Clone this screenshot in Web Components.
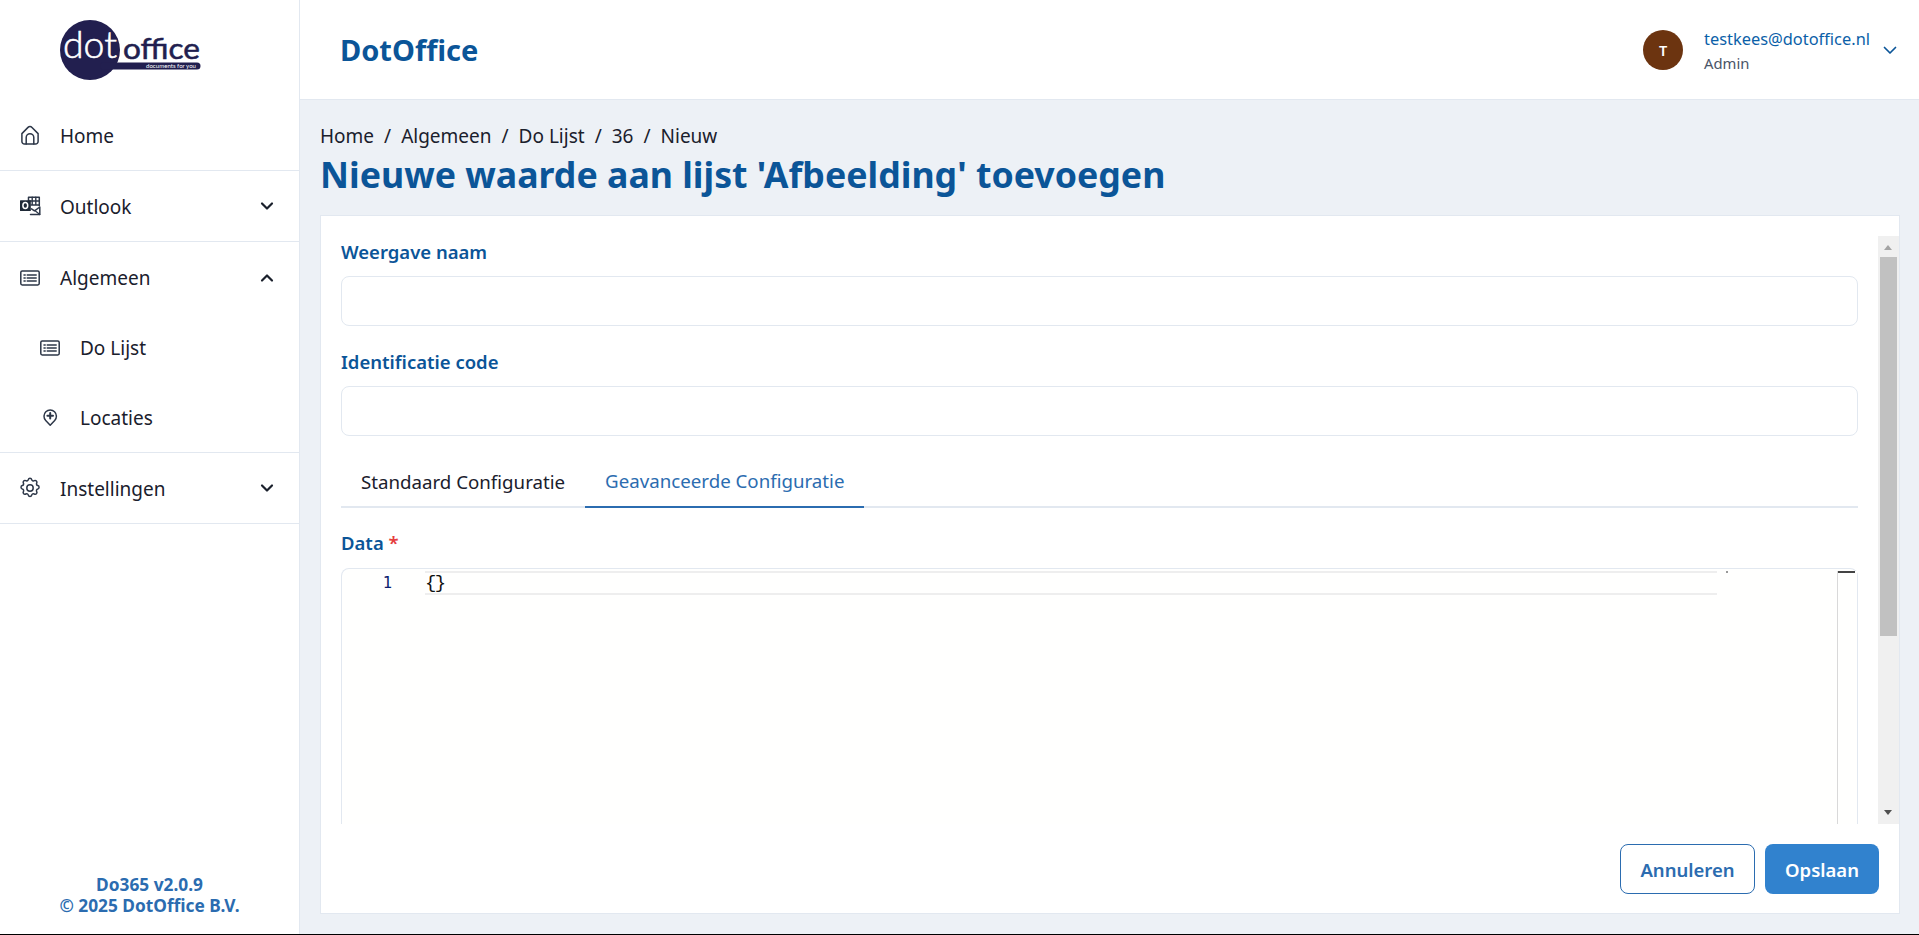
<!DOCTYPE html>
<html lang="nl"><head><meta charset="utf-8"><title>DotOffice</title>
<style>
html,body{margin:0;padding:0;height:100%;background:#000;overflow:hidden}
body{font-family:"Noto Sans","Open Sans",sans-serif;color:#1a202c}
app-shell{height:934px}
</style></head><body>
<app-shell>
  <side-bar slot="side">
    <nav-item label="Home" icon="home" low></nav-item>
    <nav-item label="Outlook" icon="outlook" chevron="down" low></nav-item>
    <nav-item label="Algemeen" icon="list" chevron="up" noline></nav-item>
    <nav-item label="Do Lijst" icon="list" sub noline></nav-item>
    <nav-item label="Locaties" icon="pin" sub></nav-item>
    <nav-item label="Instellingen" icon="gear" chevron="down" low></nav-item>
  </side-bar>
  <top-bar slot="top"></top-bar>
  <page-head slot="head"></page-head>
  <form-card slot="card"></form-card>
</app-shell>
<script>
const ICONS={
home:'<path d="M3.9 10.6 10 4.4a2.8 2.8 0 0 1 4 0l6.100 6.200v7.900a2.500 2.500 0 0 1-2.500 2.500H6.400a2.500 2.500 0 0 1-2.500-2.500z"/><path d="M8.200 21v-6.500a3.800 3.800 0 0 1 7.600 0V21"/>',
outlook:'<path d="M10.500 3.200h10.800v8.600M10.500 3.200v3.500" stroke-width="1.500"/><path d="M10.500 7h10.800M13 11h8.300M14.200 3.200V11M17.800 3.200V11" stroke-width="1.400"/><path d="M12.500 20.500h9.300v-7.500l-5.300 3.800-3-2" stroke-width="1.500"/><path d="M21.800 20.500l-5-4" stroke-width="1.200"/><rect x="2" y="6.200" width="10.800" height="10.800" rx=".5" fill="#1f2937" stroke="none"/><ellipse cx="7.300" cy="11.600" rx="2.400" ry="3" fill="none" stroke="#fff" stroke-width="1.500"/>',
list:'<rect x="2.800" y="5" width="18.400" height="14" rx="1.400"/><path d="M6 9h1.200M6 12h1.200M6 15h1.200M9.200 9h9M9.200 12h9M9.200 15h9"/>',
pin:'<path d="M12.200 19.200 7.700 14.500a6.200 6.200 0 1 1 9 0z"/><path d="M12.200 7v5.600M9.400 9.800h5.600" stroke-width="2"/>',
gear:'<path d="M10.300 3.600c.4-1.700 3-1.700 3.400 0a1.700 1.700 0 0 0 2.600 1.100c1.500-.9 3.300.8 2.400 2.400a1.700 1.700 0 0 0 1.100 2.500c1.700.4 1.700 3 0 3.400a1.700 1.700 0 0 0-1.100 2.600c.9 1.500-.8 3.300-2.400 2.400a1.700 1.700 0 0 0-2.600 1.100c-.4 1.700-3 1.700-3.400 0a1.700 1.700 0 0 0-2.500-1.100c-1.600.9-3.300-.9-2.400-2.400a1.700 1.700 0 0 0-1.100-2.600c-1.700-.4-1.700-3 0-3.400a1.700 1.700 0 0 0 1.100-2.500c-.9-1.600.8-3.300 2.400-2.400a1.700 1.700 0 0 0 2.500-1.100z"/><circle cx="12" cy="12" r="3.200"/>',
};
const def=(n,html,setup)=>customElements.define(n,class extends HTMLElement{
  connectedCallback(){if(this.shadowRoot)return;const r=this.attachShadow({mode:'open'});
    r.innerHTML=typeof html==='function'?html(this):html;setup&&setup(r,this);}
});

def('app-shell',`<style>
:host{display:grid;grid-template-columns:300px 1fr;grid-template-rows:100px 1fr;width:1919px;background:#edf1f6;overflow:hidden}
.s{grid-row:1/3;display:flex;min-height:0}
.t{display:flex}
.m{display:flex;flex-direction:column;padding:24px 19px 20px 20px;min-height:0;min-width:0}
</style>
<div class="s"><slot name="side"></slot></div>
<div class="t"><slot name="top"></slot></div>
<div class="m"><slot name="head"></slot><slot name="card"></slot></div>`);

def('side-bar',`<style>
:host{display:flex;flex-direction:column;width:300px;box-sizing:border-box;background:#fff;border-right:1px solid #e2e8f0}
.logo{height:100px;flex:none;display:block}
.logo svg{display:block}
.items{flex:1;display:flex;flex-direction:column}
.foot{text-align:center;color:#2b6cb0;font-weight:700;font-size:17.300px;line-height:21px;padding-bottom:18px}
</style>
<div class="logo"><svg width="299" height="100" viewBox="0 0 299 100">
<circle cx="90" cy="50" r="30" fill="#221f4f"/>
<rect x="100" y="62.500" width="100.500" height="7" rx="3.500" fill="#221f4f"/>
<text x="63" y="58" font-family="Lato" font-size="38" font-weight="300" fill="#fff" stroke="#fff" stroke-width=".6" textLength="54" lengthAdjust="spacingAndGlyphs">dot</text>
<text x="123" y="58.500" font-family="Lato" font-size="28" font-weight="400" fill="#221f4f" stroke="#221f4f" stroke-width=".5" textLength="77" lengthAdjust="spacingAndGlyphs">office</text>
<text x="146" y="68.300" font-family="Lato" font-size="6.400" fill="#fff" textLength="50" lengthAdjust="spacingAndGlyphs">documents for you</text>
</svg></div>
<div class="items"><slot></slot></div>
<div class="foot">Do365 v2.0.9<br>© 2025 DotOffice B.V.</div>`);

def('nav-item',h=>{
 const sub=h.hasAttribute('sub'),c=h.getAttribute('chevron');
 return `<style>
:host{display:flex;align-items:center;height:${sub?70:71}px;box-sizing:border-box;padding-left:${sub?38:18}px;padding-right:22px;font-size:19px;color:#1a202c;${h.hasAttribute('noline')?'':'border-bottom:1px solid #e2e8f0;'}}
svg.i{width:24px;height:24px;flex:none;fill:none;stroke:#2d3748;stroke-width:1.500;stroke-linecap:round;stroke-linejoin:round}
span{flex:1;margin-left:18px;line-height:26px;${h.hasAttribute('low')?'padding-top:2px;':''}}
svg.c{width:20px;height:20px;fill:none;stroke:#1a202c;stroke-width:2.200;stroke-linecap:round;stroke-linejoin:round}
</style><svg class="i" viewBox="0 0 24 24">${ICONS[h.getAttribute('icon')]}</svg><span>${h.getAttribute('label')}</span>${c?`<svg class="c" viewBox="0 0 20 20"><path d="${c=='down'?'M5 7.500l5 5 5-5':'M5 12.500l5-5 5 5'}"/></svg>`:''}`;
});

def('top-bar',`<style>
:host{display:flex;flex:1;align-items:center;background:#fff;border-bottom:1px solid #e2e8f0;box-sizing:border-box;height:100px;padding:0 19px 0 40px}
.b{font-size:29px;font-weight:700;color:#0b5598;flex:1}
.av{width:40px;height:40px;border-radius:50%;background:#6c3410;color:#fff;display:flex;align-items:center;justify-content:center;font-size:14.500px;font-weight:600;margin-right:21px}
.u{display:flex;flex-direction:column;margin-right:10px;padding-top:2px}
.e{font-size:16.400px;line-height:22px;color:#0b5fa8;height:25px}
.r{font-size:14.800px;line-height:20px;color:#4a5568}
svg{width:20px;height:20px;fill:none;stroke:#0b5598;stroke-width:1.700;stroke-linecap:round;stroke-linejoin:round}
</style><div class="b">DotOffice</div><div class="av">T</div><div class="u"><div class="e">testkees@dotoffice.nl</div><div class="r">Admin</div></div><svg viewBox="0 0 20 20"><path d="M4.500 7.500l5.500 5.500 5.500-5.500"/></svg>`);

def('page-head',`<style>
:host{display:block;flex:none;height:91px}
.c{display:flex;gap:10px;font-size:19px;line-height:24px;color:#1a202c;height:24px}
.c i{font-style:normal}
h1{margin:4px 0 0;font-size:35.700px;line-height:44px;font-weight:700;color:#0b5598}
</style><div class="c"><span>Home</span><i>/</i><span>Algemeen</span><i>/</i><span>Do Lijst</span><i>/</i><span>36</span><i>/</i><span>Nieuw</span></div>
<h1>Nieuwe waarde aan lijst 'Afbeelding' toevoegen</h1>`);

def('field-input',h=>`<style>
:host{display:block}
label{display:block;font-size:18.500px;font-weight:600;color:#0b5598;line-height:24px;margin-bottom:12px}
.in{height:50px;box-sizing:border-box;border:1px solid #e2e8f0;border-radius:8px;background:#fff}
</style><label>${h.getAttribute('label')}</label><div class="in"></div>`);

def('tab-bar',`<style>
:host{display:flex;height:53px;box-sizing:border-box;border-bottom:2px solid #e2e8f0;font-size:18.700px;line-height:24px}
div{display:flex;align-items:center;padding:0 20px;margin-bottom:-2px;height:53px;box-sizing:border-box;color:#1a202c}
.a{color:#2b6cb0;border-bottom:2px solid #2b6cb0}
</style><div>Standaard Configuratie</div><div class="a">Geavanceerde Configuratie</div>`);

def('code-editor',`<style>
:host{display:block;flex:none;height:320px;box-sizing:border-box;border:1px solid #e2e8f0;border-radius:8px 8px 0 0;border-bottom:0;background:#fffffe;padding-top:2px;position:relative}
.l{display:flex;height:24px}
.n{width:83px;flex:none;box-sizing:border-box;padding:1px 33px 0 0;text-align:right;font:15.500px/23px "DejaVu Sans Mono","Liberation Mono",monospace;color:#0b216f}
.h{flex:none;width:1292px;box-sizing:border-box;border:solid #eee;border-width:2px 0;padding-top:1px;font:19px/19px "Liberation Mono",monospace;letter-spacing:-1.700px;color:#111}
.dot{position:absolute;left:1384px;top:2px;width:2px;height:2px;background:#999}
.mm{position:absolute;right:0;top:2px;bottom:0;width:19px;border-left:1px solid #d9d9d9;background:#fffffe}
.mm i{position:absolute;left:0;right:2px;top:0;height:2px;background:#444}
</style><div class="l"><div class="n">1</div><div class="h">{}</div></div><div class="dot"></div><div class="mm"><i></i></div>`);

def('scroll-bar',`<style>
:host{display:flex;flex-direction:column;flex:none;width:21px;background:#f0f0f0;position:relative;align-items:center}
.u,.d{width:0;height:0;border-left:4.500px solid transparent;border-right:4.500px solid transparent;margin-left:-1px}
.u{border-bottom:5px solid #a3a3a3;margin-top:9px}
.t{width:17px;height:379px;background:#c1c1c1;margin-top:7px}
.d{border-top:5px solid #505050;margin-top:auto;margin-bottom:9px}
</style><div class="u"></div><div class="t"></div><div class="d"></div>`);

def('form-card',`<style>
:host{display:flex;flex-direction:column;flex:none;height:699px;background:#fff;border:1px solid #e2e8f0;box-sizing:border-box}
.top{display:flex;flex:none;height:608px;padding-top:20px;box-sizing:border-box}
.sc{flex:1;min-width:0;overflow:hidden;padding:4px 20px 0 20px;display:flex;flex-direction:column}
field-input+field-input{margin-top:24px}
tab-bar{margin-top:19px}
.d{flex:none;font-size:18.500px;font-weight:600;color:#0b5598;line-height:24px;margin:23px 0 13px}
.d em{font-style:normal;color:#e53e3e}
.bt{display:flex;justify-content:flex-end;gap:10px;padding:20px 20px 0 0}
.b{height:50px;border-radius:8px;box-sizing:border-box;display:flex;align-items:center;justify-content:center;font-size:18.500px;font-weight:600}
.o{width:135px;border:1px solid #2b6cb0;color:#2b6cb0;background:#fff}
.p{width:114px;background:#3182ce;color:#fff}
</style><div class="top"><div class="sc">
<field-input label="Weergave naam"></field-input>
<field-input label="Identificatie code"></field-input>
<tab-bar></tab-bar>
<div class="d">Data <em>*</em></div>
<code-editor></code-editor>
</div><scroll-bar></scroll-bar></div>
<div class="bt"><div class="b o">Annuleren</div><div class="b p">Opslaan</div></div>`);
</script>
</body></html>
